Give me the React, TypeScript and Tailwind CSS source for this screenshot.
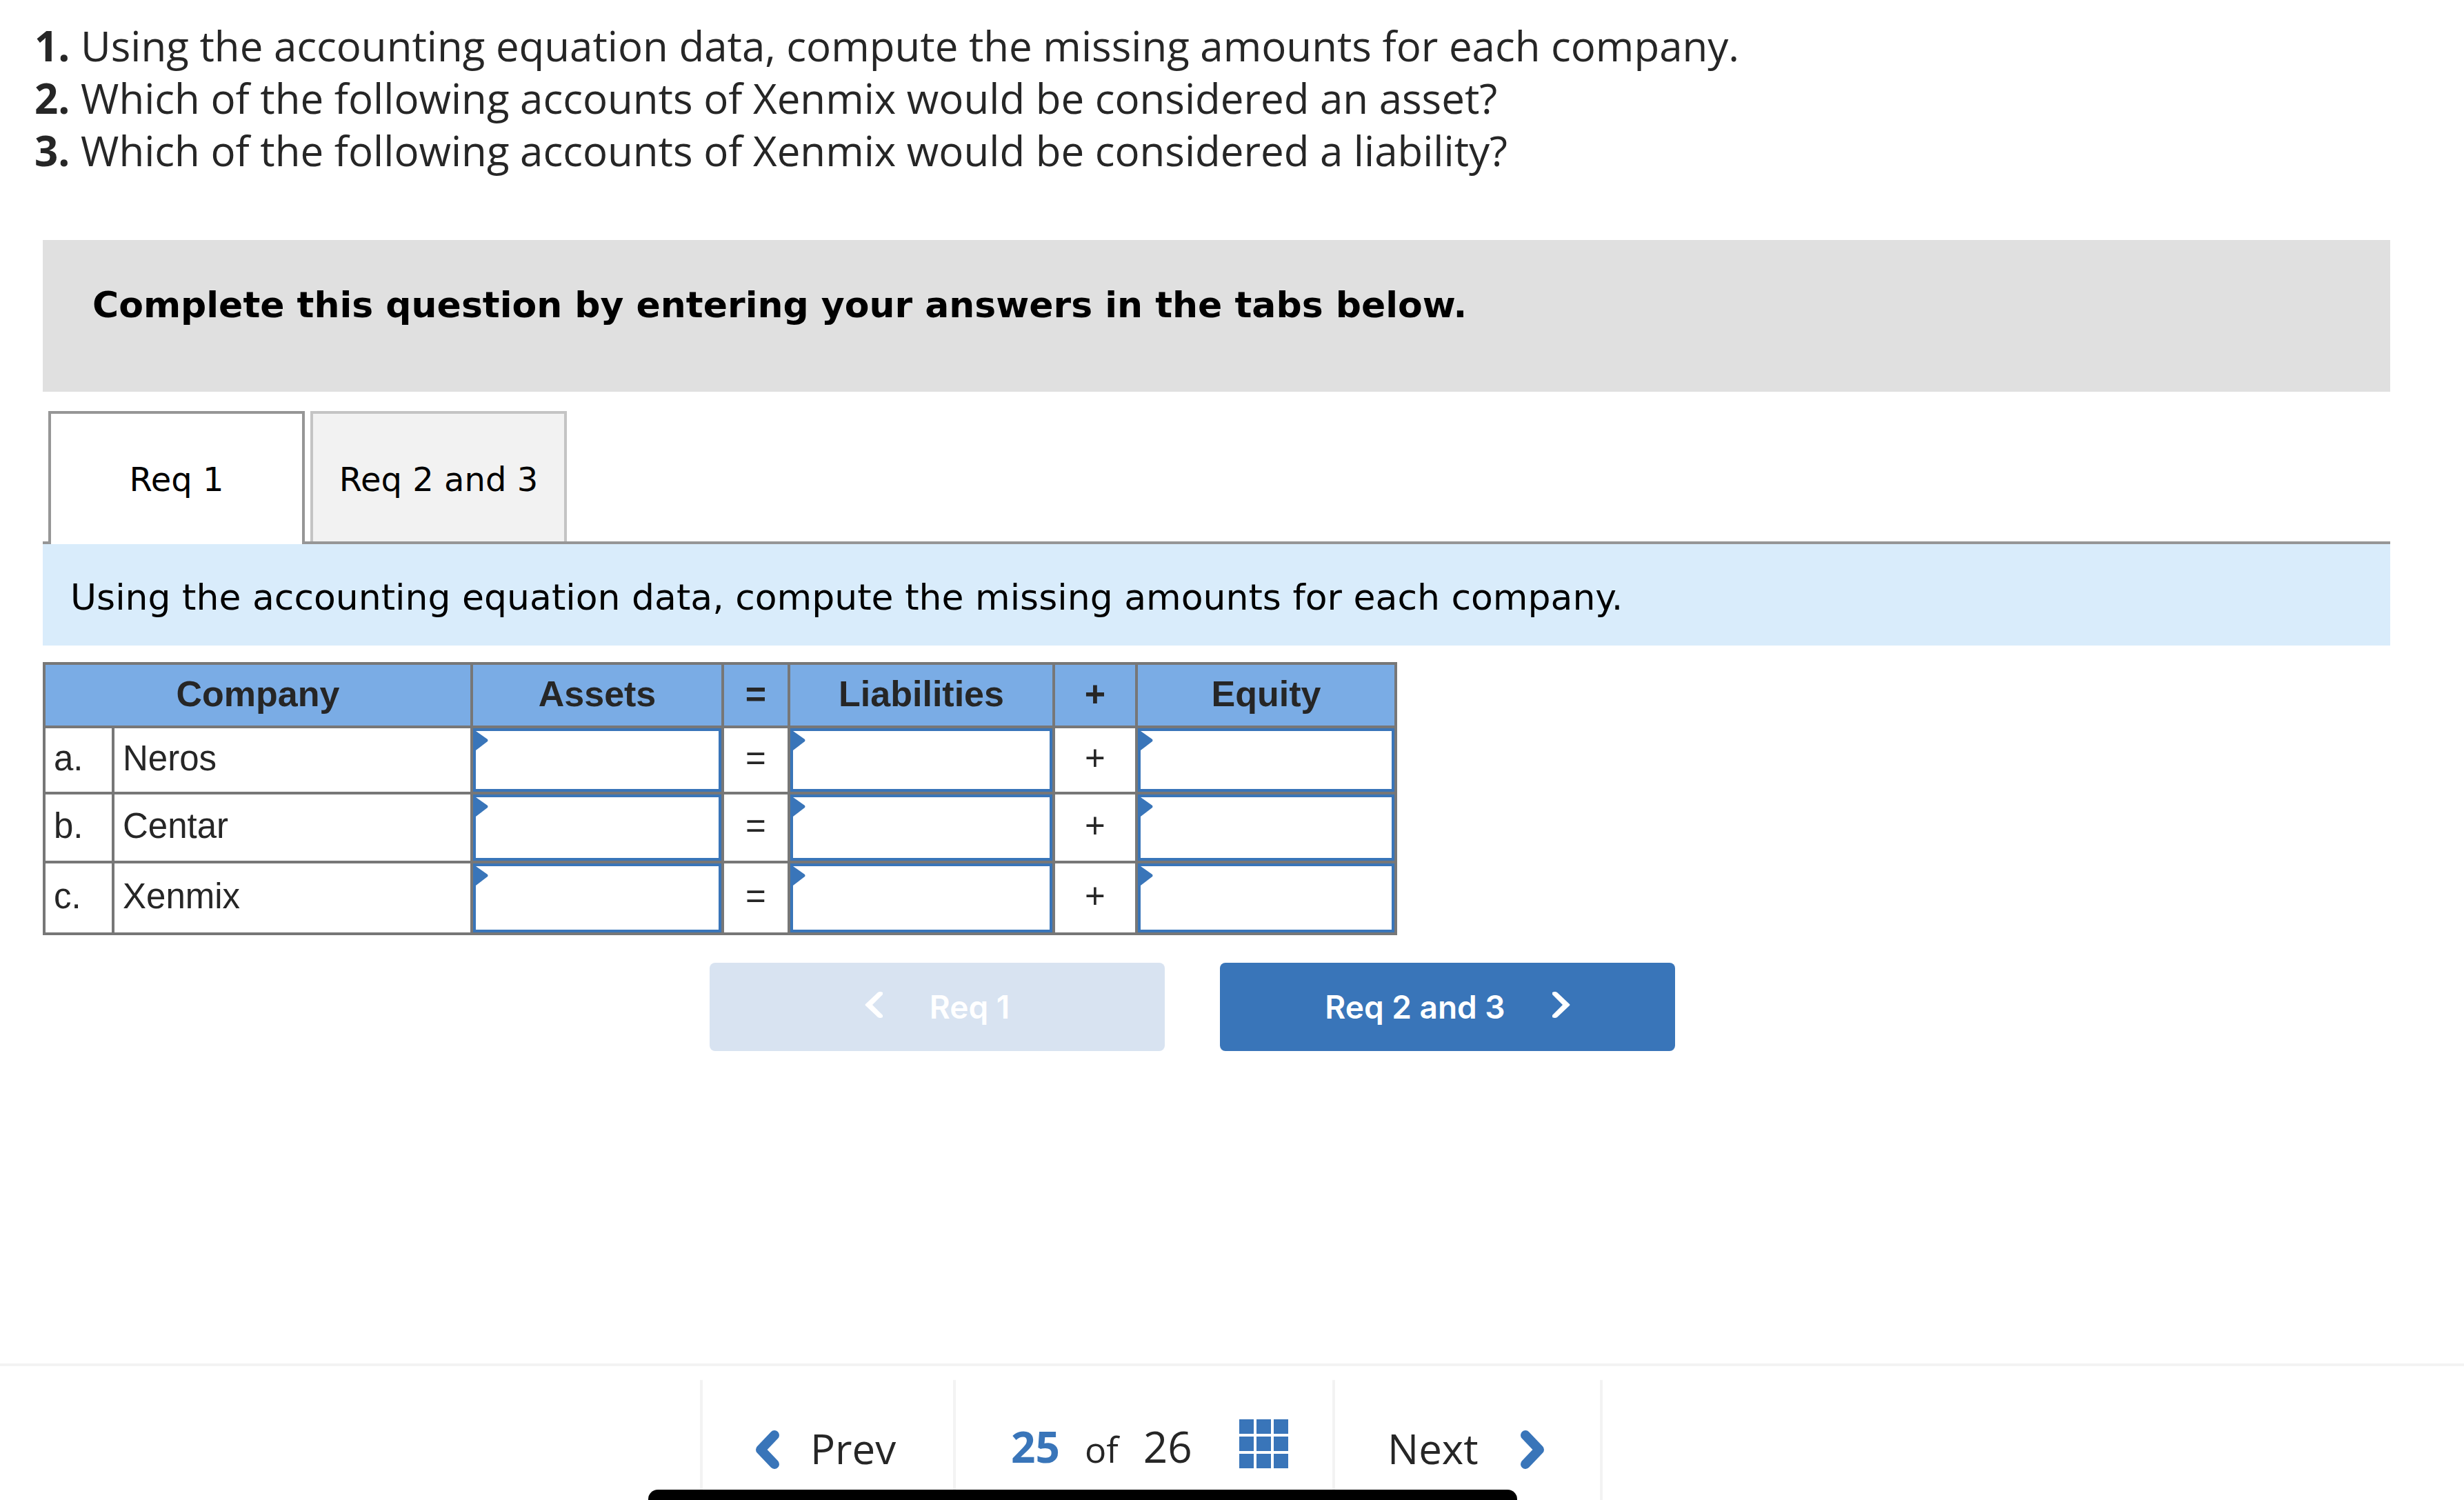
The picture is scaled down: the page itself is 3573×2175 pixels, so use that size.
import { useState } from "react";

const requirements = [
  "Using the accounting equation data, compute the missing amounts for each company.",
  "Which of the following accounts of Xenmix would be considered an asset?",
  "Which of the following accounts of Xenmix would be considered a liability?",
];

const companies = [
  { key: "a.", name: "Neros", height: "h-[96px]" },
  { key: "b.", name: "Centar", height: "h-[100px]" },
  { key: "c.", name: "Xenmix", height: "h-[104px]" },
];

const cell = "border-4 border-[#777777] p-0 pb-1";

function AnswerCell({ label }: { label: string }) {
  return (
    <td className={`${cell} relative`}>
      <input
        type="text"
        aria-label={label}
        className="absolute inset-0 block h-full w-full border-4 border-[#3975b9] bg-white px-6 outline-none"
      />
      <svg
        className="pointer-events-none absolute top-1 left-1 h-[28px] w-[18px]"
        viewBox="0 0 18 28"
        fill="#3975b9"
      >
        <path d="M0 0 L17 12 Q18 14 17 15 L0 28 Z" />
      </svg>
    </td>
  );
}

function StepChevron({ flip = false }: { flip?: boolean }) {
  return (
    <svg
      className={flip ? "mb-[6px] h-10 w-[26px] rotate-180" : "mb-[6px] h-10 w-[26px]"}
      viewBox="0 0 26 40"
      fill="currentColor"
    >
      <path d="M19 2 Q22 0 26 2 V5 L11 20 L26 35 V38 Q22 40 19 38 L1 21 Q0 20 1 19 Z" />
    </svg>
  );
}

function PageChevron({ flip = false }: { flip?: boolean }) {
  return (
    <svg
      className={flip ? "mt-1 h-14 w-9 rotate-180 text-[#3975b9]" : "mt-1 h-14 w-9 text-[#3975b9]"}
      viewBox="0 0 36 56"
      fill="none"
      stroke="currentColor"
      strokeWidth={14}
      strokeLinecap="round"
      strokeLinejoin="round"
    >
      <path d="M28 7 L8 28 L28 49" />
    </svg>
  );
}

export default function App() {
  const [tab, setTab] = useState(0);

  const tabClass = (active: boolean) =>
    active
      ? "h-[193px] w-[372px] border-4 border-b-0 border-[#969696] bg-white"
      : "h-[189px] w-[372px] border-4 border-b-0 border-[#c4c4c4] bg-[#f2f2f2] pt-1";

  return (
    <div className="flex min-h-screen flex-col overflow-hidden bg-white font-['Liberation_Sans',sans-serif] text-[#262626]">
      <main className="flex-1 pt-7 pr-[107px] pl-[62px]">
        <ol className="-ml-3 font-['Open_Sans',sans-serif] text-[60px] leading-[76px]">
          {requirements.map((text, i) => (
            <li key={text}>
              <b>{i + 1}.</b> {text}
            </li>
          ))}
        </ol>

        <div className="mt-[92px] h-[220px] bg-[#e0e0e0] px-[72px] pt-[62px] font-['DejaVu_Sans',sans-serif] text-[52px] leading-[64px] font-bold text-black">
          Complete this question by entering your answers in the tabs below.
        </div>

        <div className="mt-7 flex h-[193px] items-start gap-2 border-b-4 border-[#969696] pl-2 font-['DejaVu_Sans',sans-serif] text-[48px] text-black">
          <button type="button" onClick={() => setTab(0)} className={tabClass(tab === 0)}>
            Req 1
          </button>
          <button type="button" onClick={() => setTab(1)} className={tabClass(tab === 1)}>
            Req 2 and 3
          </button>
        </div>
        <div className="h-[147px] bg-[#d9ecfb] px-10 pt-[45px] font-['DejaVu_Sans',sans-serif] text-[52px] leading-[64px] text-black">
          Using the accounting equation data, compute the missing amounts for each company.
        </div>

        <table className="mt-6 w-[1964px] table-fixed border-collapse text-[51px] leading-[56px]">
          <colgroup>
            <col className="w-[100px]" />
            <col className="w-[520px]" />
            <col className="w-[364px]" />
            <col className="w-[96px]" />
            <col className="w-[384px]" />
            <col className="w-[120px]" />
            <col className="w-[376px]" />
          </colgroup>
          <thead className="bg-[#7aace5] text-[52px]">
            <tr className="h-[92px]">
              <th className={cell} colSpan={2}>Company</th>
              <th className={cell}>Assets</th>
              <th className={cell}>=</th>
              <th className={cell}>Liabilities</th>
              <th className={cell}>+</th>
              <th className={cell}>Equity</th>
            </tr>
          </thead>
          <tbody>
            {companies.map((c) => (
              <tr key={c.key} className={c.height}>
                <td className={`${cell} pl-3`}>{c.key}</td>
                <td className={`${cell} pl-3`}>{c.name}</td>
                <AnswerCell label={`${c.name} assets`} />
                <td className={`${cell} text-center`}>=</td>
                <AnswerCell label={`${c.name} liabilities`} />
                <td className={`${cell} text-center`}>+</td>
                <AnswerCell label={`${c.name} equity`} />
              </tr>
            ))}
          </tbody>
        </table>

        <div className="mt-10 flex justify-center gap-20 pr-[70px] font-['Inter',sans-serif] text-[46px] font-semibold text-white">
          <button
            type="button"
            disabled
            className="flex h-32 w-[660px] items-center justify-center gap-[68px] rounded-lg bg-[#d8e3f1]"
          >
            <StepChevron />
            Req 1
          </button>
          <button
            type="button"
            onClick={() => setTab(1)}
            className="flex h-32 w-[660px] items-center justify-center gap-[68px] rounded-lg bg-[#3975b9]"
          >
            Req 2 and 3
            <StepChevron flip />
          </button>
        </div>
      </main>

      <footer className="relative border-t-4 border-[#f3f3f3] pt-5">
        <nav className="flex h-[174px] justify-center pr-[234px] font-['Open_Sans',sans-serif] text-[60px]">
          <button type="button" className="flex w-[367px] items-center gap-11 border-l-4 border-[#f3f3f3] pt-6 pl-[76px]">
            <PageChevron />
            Prev
          </button>
          <div className="flex w-[550px] items-center gap-[68px] border-l-4 border-[#f3f3f3] pt-[18px] pl-20">
            <div className="flex items-baseline gap-9 text-[62px]">
              <b className="text-[#3975b9]">25</b>
              <span className="text-[52px]">of</span>
              <span>26</span>
            </div>
            <button type="button" aria-label="Question list" className="mb-[6px]">
              <svg className="size-[72px]" viewBox="0 0 72 72" fill="#3975b9">
                <path d="M0 0h21v21H0zM25 0h21v21H25zM50 0h21v21H50zM0 25h21v21H0zM25 25h21v21H25zM50 25h21v21H50zM0 50h21v21H0zM25 50h21v21H25zM50 50h21v21H50z" />
              </svg>
            </button>
          </div>
          <button type="button" className="flex w-[392px] items-center gap-[60px] border-x-4 border-[#f3f3f3] pt-6 pl-[76px]">
            Next
            <PageChevron flip />
          </button>
        </nav>
        <div className="absolute bottom-0 left-[940px] h-[15px] w-[1260px] rounded-t-[14px] bg-black" />
      </footer>
    </div>
  );
}
